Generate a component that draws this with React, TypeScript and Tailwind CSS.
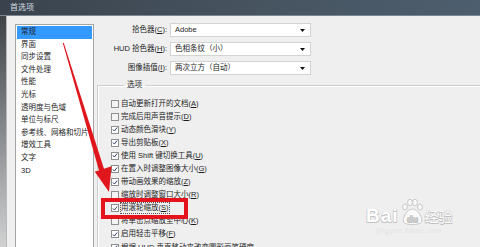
import React from 'react';

const listItems = [
  '常规',
  '界面',
  '同步设置',
  '文件处理',
  '性能',
  '光标',
  '透明度与色域',
  '单位与标尺',
  '参考线、网格和切片',
  '增效工具',
  '文字',
  '3D',
];

const pickers = [
  { label: '拾色器', key: 'C', value: 'Adobe' },
  { label: 'HUD 拾色器', key: 'H', value: '色相条纹（小）' },
  { label: '图像插值', key: 'I', value: '两次立方（自动）' },
];

const options = [
  { label: '自动更新打开的文档', key: 'A', checked: false },
  { label: '完成后用声音提示', key: 'D', checked: false },
  { label: '动态颜色滑块', key: 'Y', checked: true },
  { label: '导出剪贴板', key: 'X', checked: true },
  { label: '使用 Shift 键切换工具', key: 'U', checked: true },
  { label: '在置入时调整图像大小', key: 'G', checked: true },
  { label: '带动画效果的缩放', key: 'Z', checked: true },
  { label: '缩放时调整窗口大小', key: 'R', checked: false },
  { label: '用滚轮缩放', key: 'S', checked: true, focused: true },
  { label: '将单击点缩放至中心', key: 'K', checked: false },
  { label: '启用轻击平移', key: 'F', checked: true },
  { label: '根据 HUD 垂直移动来改变圆形画笔硬度', key: '', checked: true },
];

function Checkbox({ checked }: { checked: boolean }) {
  return (
    <span
      className={`w-[8px] h-[8px] mr-[2px] shrink-0 border border-[#8e8f8f] flex items-center justify-center ${
        checked ? 'bg-white' : 'bg-[#f4f4f4]'
      }`}
    >
      {checked && (
        <svg width="7" height="7" viewBox="0 0 7 7">
          <path d="M1 3.4 L2.8 5.3 L6 1.2" fill="none" stroke="#27365e" strokeWidth="1.1" />
        </svg>
      )}
    </span>
  );
}

export default function App() {
  return (
    <div className="w-[480px] h-[247px] overflow-hidden relative flex flex-col bg-[#efefef] text-[#1e1e1e] font-['Liberation_Sans','Noto_Sans_CJK_SC',sans-serif] text-[7.5px]">
      {/* Title bar */}
      <div className="h-[16px] shrink-0 flex items-center pl-[10px] bg-gradient-to-r from-[#3a434d] via-[#46535f] to-[#4d5e6e] border-b border-[#7b8894] text-[#d9dee3] text-[8px]">
        首选项
      </div>

      <div className="flex flex-1">
        {/* window edge */}
        <div className="w-[7px] shrink-0 bg-gradient-to-b from-[#3f4348] via-[#8d9093] to-[#dcdcdc] border-r border-[#b9b9b9]" />

        {/* Category list */}
        <div className="ml-[8px] mt-[8px] w-[79px] h-[240px] shrink-0 bg-white border border-[#a3a3a3] pt-px px-px">
          {listItems.map((item, i) => (
            <div
              key={item}
              className={`h-[12.6px] leading-[12.6px] pl-[4px] whitespace-nowrap ${i === 0 ? 'bg-[#3399ff]' : ''}`}
            >
              {item}
            </div>
          ))}
        </div>

        {/* Right side */}
        <div className="flex flex-col pt-[7px]">
          <div className="flex flex-col gap-[5px]">
            {pickers.map((p) => (
              <div key={p.key} className="flex items-center">
                <div className="w-[73px] text-right whitespace-nowrap">
                  {p.label}(<span className="underline">{p.key}</span>):
                </div>
                <div className="ml-[3px] w-[141px] h-[14px] bg-white border border-[#d3d3d3] flex items-center justify-between pl-[4px] pr-[5px]">
                  <span className="whitespace-nowrap">{p.value}</span>
                  <svg width="5" height="3" viewBox="0 0 5 3">
                    <path d="M0 0 H5 L2.5 3 Z" fill="#111" />
                  </svg>
                </div>
              </div>
            ))}
          </div>

          <fieldset className="ml-[3px] mt-[4px] w-[420px] border-t border-l border-[#cfcfcf] pl-[13px] pt-[6px] shadow-[inset_1px_1px_0_#ffffff]">
            <legend className="ml-[13px] px-[3px] leading-[12px]">选项</legend>
            {options.map((o) => (
              <div key={o.label} className="h-[13.1px] flex items-center">
                <Checkbox checked={o.checked} />
                <span
                  className={`whitespace-nowrap leading-[10px] ${
                    o.focused ? 'outline outline-1 outline-dotted outline-[#555]' : ''
                  }`}
                >
                  {o.label}
                  {o.key && (
                    <>
                      (<span className="underline">{o.key}</span>)
                    </>
                  )}
                </span>
              </div>
            ))}
          </fieldset>
        </div>
      </div>

      {/* red highlight box */}
      <div className="absolute left-[101px] top-[198px] w-[87px] h-[21px] border-[4px] border-[#e5141c]" />

      {/* red arrow */}
      <svg className="absolute left-0 top-0" width="480" height="247" viewBox="0 0 480 247">
        <polygon points="62.8,43 63.8,43 105,172 100,174" fill="#e0161d" />
        <polygon points="94.8,171.8 111.6,166.2 109,192" fill="#e0161d" />
      </svg>

      {/* watermark */}
      <div className="absolute left-[366px] top-[198px] flex flex-col items-center text-white [text-shadow:0.5px_0.5px_0_#c2c2c2,-0.5px_-0.5px_0_#c2c2c2,0.5px_-0.5px_0_#c2c2c2,-0.5px_0.5px_0_#c2c2c2]">
        <div className="flex items-end">
          <span className="font-['Liberation_Sans',sans-serif] font-bold text-[19px] leading-[20px] tracking-[1px]">Bai</span>
          <svg width="24" height="28" viewBox="0 0 24 28" className="mx-[1px]">
            <ellipse cx="5" cy="9" rx="2.4" ry="3" fill="#fafafa" stroke="#bdbdbd" strokeWidth="0.8" />
            <ellipse cx="10" cy="4.5" rx="2.4" ry="3.2" fill="#fafafa" stroke="#bdbdbd" strokeWidth="0.8" />
            <ellipse cx="15" cy="4.5" rx="2.4" ry="3.2" fill="#fafafa" stroke="#bdbdbd" strokeWidth="0.8" />
            <ellipse cx="20" cy="9" rx="2.4" ry="3" fill="#fafafa" stroke="#bdbdbd" strokeWidth="0.8" />
            <path d="M12.5 11 C7 11 2 20 3.5 24 C5 27.5 20 27.5 21.5 24 C23 20 18 11 12.5 11 Z" fill="#fafafa" stroke="#bdbdbd" strokeWidth="0.8" />
            <text x="12.5" y="24" textAnchor="middle" fontSize="9" fontFamily="Liberation Sans, sans-serif" fill="#cfcfcf" fontWeight="bold">du</text>
          </svg>
          <span className="font-['Noto_Sans_CJK_SC',sans-serif] text-[14px] leading-[20px]">经验</span>
        </div>
        <div className="text-[7px] leading-[9px] text-[#e2e2e2] tracking-[0.5px] [text-shadow:none]">jingyan.baidu.com</div>
      </div>
    </div>
  );
}
